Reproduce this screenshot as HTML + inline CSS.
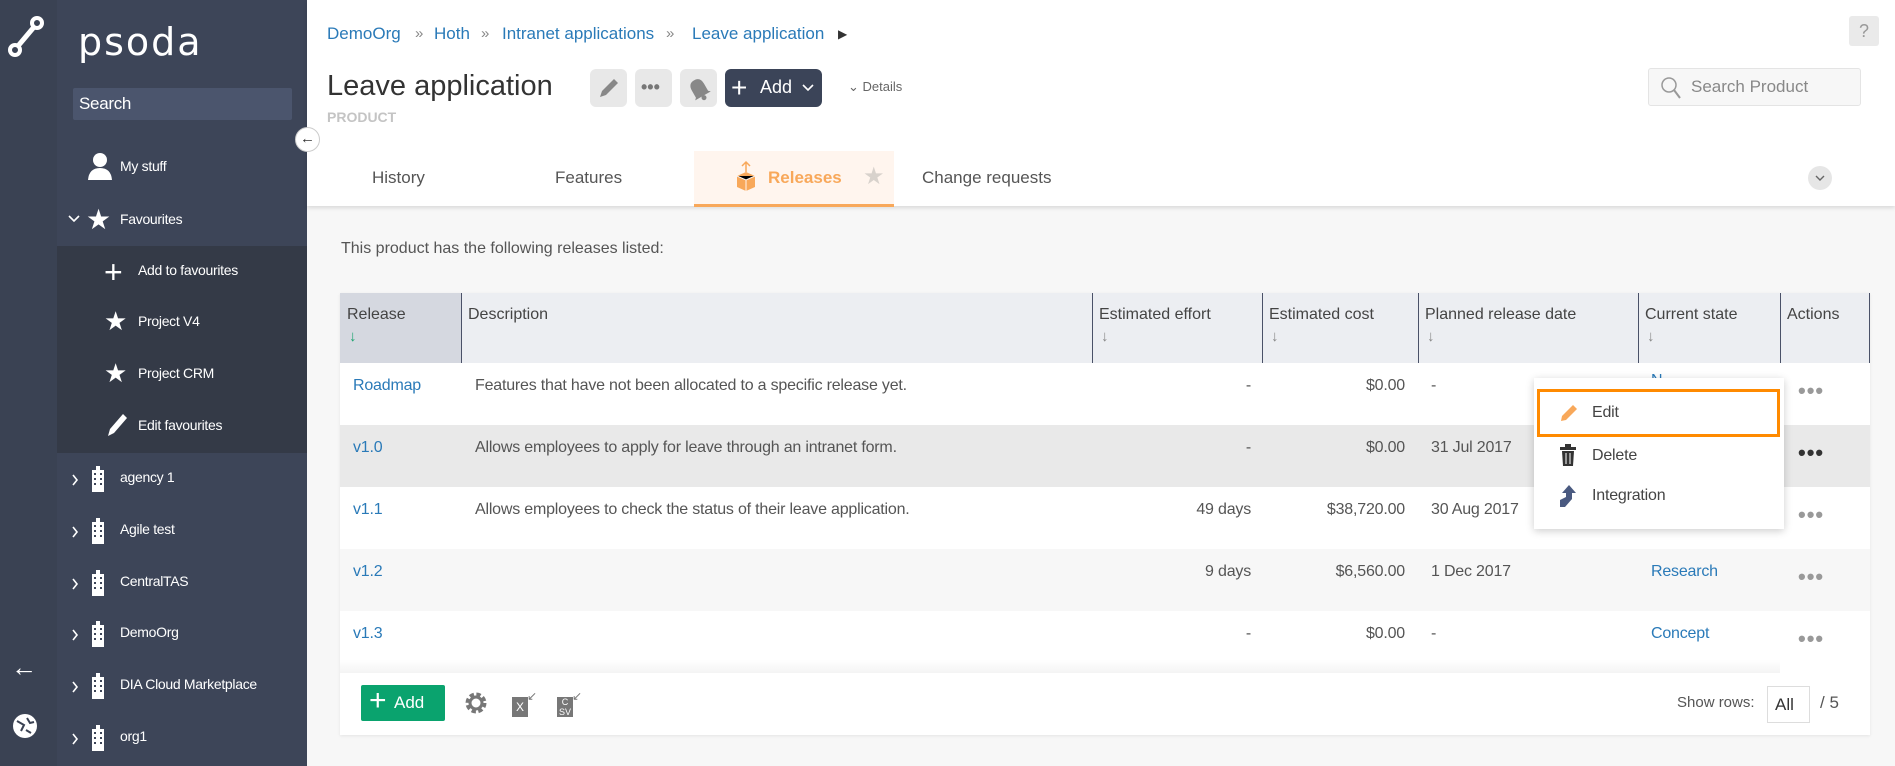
<!DOCTYPE html>
<html><head><meta charset="utf-8"><style>
*{box-sizing:border-box;margin:0;padding:0}
body{width:1895px;height:766px;position:relative;overflow:hidden;background:#f7f7f7;font-family:"Liberation Sans",sans-serif;color:#444}
.a{position:absolute;white-space:nowrap}
#strip{left:0;top:0;width:57px;height:766px;background:#3a4253}
#side{left:57px;top:0;width:250px;height:766px;background:#3d4558}
#sub{left:57px;top:246px;width:250px;height:207px;background:#343a47}
.si{color:#fff;font-size:14px;letter-spacing:-0.3px}
.chev{color:#fff;font-size:22px;font-weight:300}
#top{left:307px;top:0;width:1588px;height:206px;background:#fff;box-shadow:0 2px 4px rgba(0,0,0,.12)}
.bc{color:#2a7ab8;font-size:17px;top:24px}
.sep{color:#888;font-size:15px;top:25px}
.gbtn{background:#e8e8e8;border-radius:6px;width:37px;height:38px;top:69px}
.tab{font-size:17px;color:#555;top:168px}
.hd{font-size:16px;color:#444;top:306px}
.ar{font-size:15px;color:#888;top:328px}
.vl{top:293px;width:1px;height:70px;background:#4a5168}
.cell{font-size:16px;color:#555;letter-spacing:-0.2px}
.lnk{color:#2a7ab8}
.dots{font-size:22px;color:#999;letter-spacing:1px;font-weight:bold}
</style></head><body>
<div class="a" id="strip"></div>
<div class="a" id="side"></div>
<div class="a" id="sub"></div>
<svg class="a" style="left:6px;top:16px" width="40" height="42" viewBox="0 0 40 42"><circle cx="31" cy="7" r="5" fill="none" stroke="#fff" stroke-width="4"/><line x1="28" y1="11" x2="12" y2="30" stroke="#fff" stroke-width="5"/><circle cx="9" cy="34" r="5" fill="none" stroke="#fff" stroke-width="4"/></svg>
<div class="a" style="left:11px;top:652px;color:#fff;font-size:26px;font-weight:bold">←</div>
<svg class="a" style="left:12px;top:713px" width="26" height="26"><circle cx="13" cy="13" r="12" fill="#fff"/><path d="M5 8 L12 12 L9 18 M15 5 L18 10 L22 9 M14 17 L19 20" stroke="#3a4253" stroke-width="2" fill="none"/></svg>
<div class="a" style="left:78px;top:20px;color:#fff;font-size:38px;letter-spacing:2px;font-family:'DejaVu Sans',sans-serif;font-weight:normal">psoda</div>
<div class="a" style="left:73px;top:88px;width:219px;height:32px;background:#4b556d;border-radius:2px"></div>
<div class="a si" style="left:79px;top:94px;font-size:17px">Search</div>
<svg class="a" style="left:87px;top:152px" width="26" height="28"><circle cx="13" cy="8" r="7" fill="#fff"/><path d="M1 28 Q2 16 13 16 Q24 16 25 28Z" fill="#fff"/></svg>
<div class="a si" style="left:120px;top:158px">My stuff</div>
<svg class="a" style="left:68px;top:215px" width="12" height="8"><path d="M1 1 L6 6 L11 1" stroke="#fff" stroke-width="1.6" fill="none"/></svg>
<div class="a" style="left:86px;top:203px;color:#fff;font-size:28px">★</div>
<div class="a si" style="left:120px;top:211px">Favourites</div>
<div class="a" style="left:104px;top:254px;color:#fff;font-size:32px;font-weight:300">+</div>
<div class="a si" style="left:138px;top:262px">Add to favourites</div>
<div class="a" style="left:104px;top:306px;color:#fff;font-size:26px">★</div>
<div class="a si" style="left:138px;top:313px">Project V4</div>
<div class="a" style="left:104px;top:358px;color:#fff;font-size:26px">★</div>
<div class="a si" style="left:138px;top:365px">Project CRM</div>
<svg class="a" style="left:105px;top:412px" width="24" height="26"><path d="M3 24 L5 17 L18 2 L22 6 L9 21Z" fill="#fff"/></svg>
<div class="a si" style="left:138px;top:417px">Edit favourites</div>
<svg width="0" height="0" style="position:absolute"><defs><g id="bld"><rect x="1" y="4" width="12" height="22" fill="#fff"/><rect x="5" y="0" width="4" height="4" fill="#fff"/><g fill="#3d4558"><rect x="3" y="7" width="2" height="2"/><rect x="9" y="7" width="2" height="2"/><rect x="3" y="12" width="2" height="2"/><rect x="9" y="12" width="2" height="2"/><rect x="3" y="17" width="2" height="2"/><rect x="9" y="17" width="2" height="2"/></g></g><path id="cv" d="M1 1 L5 6 L1 11" stroke="#fff" stroke-width="1.6" fill="none"/></defs></svg>
<svg class="a" style="left:72px;top:474px" width="8" height="12"><use href="#cv"/></svg><svg class="a" style="left:91px;top:466px" width="14" height="26"><use href="#bld"/></svg><div class="a si" style="left:120px;top:469px">agency 1</div>
<svg class="a" style="left:72px;top:526px" width="8" height="12"><use href="#cv"/></svg><svg class="a" style="left:91px;top:518px" width="14" height="26"><use href="#bld"/></svg><div class="a si" style="left:120px;top:521px">Agile test</div>
<svg class="a" style="left:72px;top:578px" width="8" height="12"><use href="#cv"/></svg><svg class="a" style="left:91px;top:570px" width="14" height="26"><use href="#bld"/></svg><div class="a si" style="left:120px;top:573px">CentralTAS</div>
<svg class="a" style="left:72px;top:629px" width="8" height="12"><use href="#cv"/></svg><svg class="a" style="left:91px;top:621px" width="14" height="26"><use href="#bld"/></svg><div class="a si" style="left:120px;top:624px">DemoOrg</div>
<svg class="a" style="left:72px;top:681px" width="8" height="12"><use href="#cv"/></svg><svg class="a" style="left:91px;top:673px" width="14" height="26"><use href="#bld"/></svg><div class="a si" style="left:120px;top:676px">DIA Cloud Marketplace</div>
<svg class="a" style="left:72px;top:733px" width="8" height="12"><use href="#cv"/></svg><svg class="a" style="left:91px;top:725px" width="14" height="26"><use href="#bld"/></svg><div class="a si" style="left:120px;top:728px">org1</div>
<div class="a" id="top"></div>
<div class="a" style="left:295px;top:127px;width:25px;height:25px;border-radius:13px;background:#fff;border:1px solid #ccc;font-size:15px;text-align:center;line-height:22px;color:#333">←</div>
<div class="a bc" style="left:327px">DemoOrg</div><div class="a sep" style="left:415px">»</div>
<div class="a bc" style="left:434px">Hoth</div><div class="a sep" style="left:481px">»</div>
<div class="a bc" style="left:502px">Intranet applications</div><div class="a sep" style="left:666px">»</div>
<div class="a bc" style="left:692px">Leave application</div><div class="a" style="left:838px;top:27px;font-size:12px;color:#333">▶</div>
<div class="a" style="left:327px;top:70px;font-size:29px;color:#333">Leave application</div>
<div class="a" style="left:327px;top:109px;font-size:14px;color:#c4c4c4;font-weight:bold">PRODUCT</div>
<div class="a gbtn" style="left:590px"></div><svg class="a" style="left:597px;top:76px" width="24" height="24"><path d="M3 21 L5 15 L17 3 L21 7 L9 19Z" fill="#888"/></svg>
<div class="a gbtn" style="left:635px"></div><div class="a" style="left:641px;top:77px;font-size:18px;color:#777;font-weight:bold">•••</div>
<div class="a gbtn" style="left:680px"></div><svg class="a" style="left:685px;top:75px" width="28" height="28"><g transform="rotate(-30 14 14)"><path d="M7 20 L7 12 Q7 4 14 4 Q21 4 21 12 L21 20 L23 22 L5 22 Z" fill="#888"/><circle cx="14" cy="24" r="2.5" fill="#888"/></g></svg>
<div class="a" style="left:725px;top:69px;width:97px;height:38px;background:#3b4458;border-radius:6px"></div>
<div class="a" style="left:731px;top:72px;color:#fff;font-size:28px;font-weight:300">+</div>
<div class="a" style="left:760px;top:77px;color:#fff;font-size:18px">Add</div>
<svg class="a" style="left:802px;top:84px" width="12" height="8"><path d="M1 1 L6 6 L11 1" stroke="#fff" stroke-width="1.6" fill="none"/></svg>
<div class="a" style="left:848px;top:79px;color:#666;font-size:13px">⌄ Details</div>
<div class="a" style="left:1849px;top:16px;width:30px;height:30px;background:#eaeaea;border-radius:3px;color:#999;font-size:18px;text-align:center;line-height:30px">?</div>
<div class="a" style="left:1648px;top:68px;width:213px;height:38px;background:#f7f7f7;border:1px solid #e4e4e4;border-radius:3px"></div>
<svg class="a" style="left:1660px;top:76px" width="22" height="24"><circle cx="9" cy="9" r="7" fill="none" stroke="#999" stroke-width="1.5"/><line x1="14" y1="14" x2="20" y2="22" stroke="#999" stroke-width="2"/></svg>
<div class="a" style="left:1691px;top:77px;color:#888;font-size:17px">Search Product</div>
<div class="a tab" style="left:372px">History</div>
<div class="a tab" style="left:555px">Features</div>
<div class="a" style="left:694px;top:151px;width:200px;height:56px;background:#fff5ee;border-bottom:3px solid #f8a85a"></div>
<svg class="a" style="left:735px;top:160px" width="22" height="32"><path d="M11 2 L11 12 M7 6 L11 2 L15 6" stroke="#f8a85a" stroke-width="1.5" fill="none"/><path d="M2 16 L11 12 L20 16 L20 27 L11 31 L2 27Z" fill="#f8a85a"/><path d="M2 16 L11 20 L20 16 M11 20 L11 31" stroke="#fff5ee" stroke-width="1"/></svg>
<div class="a tab" style="left:768px;color:#f8a85a;font-weight:bold">Releases</div>
<div class="a" style="left:863px;top:162px;color:#d8d2cc;font-size:24px">★</div>
<div class="a tab" style="left:922px">Change requests</div>
<div class="a" style="left:1808px;top:166px;width:24px;height:24px;border-radius:12px;background:#e6e6e6"></div>
<svg class="a" style="left:1815px;top:175px" width="10" height="7"><path d="M1 1 L5 5 L9 1" stroke="#666" stroke-width="1.4" fill="none"/></svg>
<div class="a" style="left:341px;top:240px;font-size:16px;color:#555">This product has the following releases listed:</div>
<div class="a" style="left:340px;top:293px;width:1530px;height:442px;background:#fff;box-shadow:0 1px 3px rgba(0,0,0,.08)"></div>
<div class="a" style="left:340px;top:293px;width:1530px;height:70px;background:#eceef2"></div>
<div class="a" style="left:340px;top:293px;width:121px;height:70px;background:#d5d8e0"></div>
<div class="a vl" style="left:461px"></div><div class="a vl" style="left:1092px"></div><div class="a vl" style="left:1262px"></div><div class="a vl" style="left:1418px"></div><div class="a vl" style="left:1638px"></div><div class="a vl" style="left:1780px"></div><div class="a vl" style="left:1869px"></div>
<div class="a hd" style="left:347px">Release</div><div class="a ar" style="left:349px;color:#1aa36e">↓</div>
<div class="a hd" style="left:468px">Description</div>
<div class="a hd" style="left:1099px">Estimated effort</div><div class="a ar" style="left:1101px">↓</div>
<div class="a hd" style="left:1269px">Estimated cost</div><div class="a ar" style="left:1271px">↓</div>
<div class="a hd" style="left:1425px">Planned release date</div><div class="a ar" style="left:1427px">↓</div>
<div class="a hd" style="left:1645px">Current state</div><div class="a ar" style="left:1647px">↓</div>
<div class="a hd" style="left:1787px">Actions</div>
<div class="a" style="left:340px;top:425px;width:1530px;height:62px;background:#e9e9e9"></div>
<div class="a" style="left:340px;top:549px;width:1530px;height:62px;background:#f7f7f7"></div>
<div class="a" style="left:340px;top:660px;width:1440px;height:13px;background:linear-gradient(#fff,#f4f4f4)"></div>
<div class="a cell lnk" style="left:353px;top:377px">Roadmap</div><div class="a cell" style="left:475px;top:377px">Features that have not been allocated to a specific release yet.</div><div class="a cell" style="right:644px;top:377px">-</div><div class="a cell" style="right:490px;top:377px">$0.00</div><div class="a cell" style="left:1431px;top:377px">-</div><div class="a cell lnk" style="left:1651px;top:372px">N</div><div class="a dots" style="left:1798px;top:378px">•••</div>
<div class="a cell lnk" style="left:353px;top:439px">v1.0</div><div class="a cell" style="left:475px;top:439px">Allows employees to apply for leave through an intranet form.</div><div class="a cell" style="right:644px;top:439px">-</div><div class="a cell" style="right:490px;top:439px">$0.00</div><div class="a cell" style="left:1431px;top:439px">31 Jul 2017</div><div class="a dots" style="left:1798px;top:440px;color:#333">•••</div>
<div class="a cell lnk" style="left:353px;top:501px">v1.1</div><div class="a cell" style="left:475px;top:501px">Allows employees to check the status of their leave application.</div><div class="a cell" style="right:644px;top:501px">49 days</div><div class="a cell" style="right:490px;top:501px">$38,720.00</div><div class="a cell" style="left:1431px;top:501px">30 Aug 2017</div><div class="a dots" style="left:1798px;top:502px">•••</div>
<div class="a cell lnk" style="left:353px;top:563px">v1.2</div><div class="a cell" style="right:644px;top:563px">9 days</div><div class="a cell" style="right:490px;top:563px">$6,560.00</div><div class="a cell" style="left:1431px;top:563px">1 Dec 2017</div><div class="a cell lnk" style="left:1651px;top:563px">Research</div><div class="a dots" style="left:1798px;top:564px">•••</div>
<div class="a cell lnk" style="left:353px;top:625px">v1.3</div><div class="a cell" style="right:644px;top:625px">-</div><div class="a cell" style="right:490px;top:625px">$0.00</div><div class="a cell" style="left:1431px;top:625px">-</div><div class="a cell lnk" style="left:1651px;top:625px">Concept</div><div class="a dots" style="left:1798px;top:626px">•••</div>
<div class="a" style="left:1534px;top:378px;width:250px;height:151px;background:#fff;box-shadow:0 2px 8px rgba(0,0,0,.2)"></div>
<div class="a" style="left:1537px;top:389px;width:243px;height:48px;border:3px solid #ff8a00"></div>
<svg class="a" style="left:1559px;top:403px" width="20" height="20"><path d="M2 18 L3 13 L14 2 L18 6 L7 17Z" fill="#f8a85a"/></svg>
<div class="a cell" style="left:1592px;top:404px;color:#444">Edit</div>
<svg class="a" style="left:1560px;top:444px" width="16" height="22"><rect x="0" y="3" width="16" height="3" fill="#333"/><rect x="5" y="0" width="6" height="3" fill="#333"/><path d="M2 7 L14 7 L13 22 L3 22Z" fill="#333"/><path d="M6 9 V20 M10 9 V20" stroke="#fff" stroke-width="1"/></svg>
<div class="a cell" style="left:1592px;top:447px;color:#444">Delete</div>
<svg class="a" style="left:1559px;top:485px" width="18" height="22"><path d="M10 0 L17 8 L13 8 L13 14 L6 22 L1 22 L1 15 L7 12 L7 8 L3 8Z" fill="#4a5a80"/></svg>
<div class="a cell" style="left:1592px;top:487px;color:#444">Integration</div>
<div class="a" style="left:361px;top:685px;width:84px;height:36px;background:#0aa36e;border-radius:2px"></div>
<div class="a" style="left:369px;top:684px;color:#fff;font-size:30px;font-weight:300">+</div>
<div class="a" style="left:394px;top:693px;color:#fff;font-size:17px">Add</div>
<svg class="a" style="left:464px;top:690px" width="24" height="26"><circle cx="12" cy="13" r="8" fill="none" stroke="#777" stroke-width="5" stroke-dasharray="4 2.3"/><circle cx="12" cy="13" r="6" fill="none" stroke="#777" stroke-width="3"/></svg>
<div class="a" style="left:512px;top:697px;width:16px;height:20px;background:#777;color:#fff;font-size:12px;text-align:center;line-height:20px">X</div>
<div class="a" style="left:527px;top:689px;color:#777;font-size:12px">↙</div>
<div class="a" style="left:557px;top:697px;width:16px;height:20px;background:#777;color:#fff;font-size:9px;text-align:center;line-height:10px">C<br>SV</div>
<div class="a" style="left:572px;top:689px;color:#777;font-size:12px">↙</div>
<div class="a" style="left:1677px;top:694px;color:#555;font-size:15px">Show rows:</div>
<div class="a" style="left:1767px;top:686px;width:43px;height:37px;border:1px solid #ddd;background:#fff;font-size:17px;color:#333;padding:8px 0 0 7px">All</div>
<div class="a" style="left:1820px;top:693px;color:#555;font-size:17px">/ 5</div>
</body></html>
